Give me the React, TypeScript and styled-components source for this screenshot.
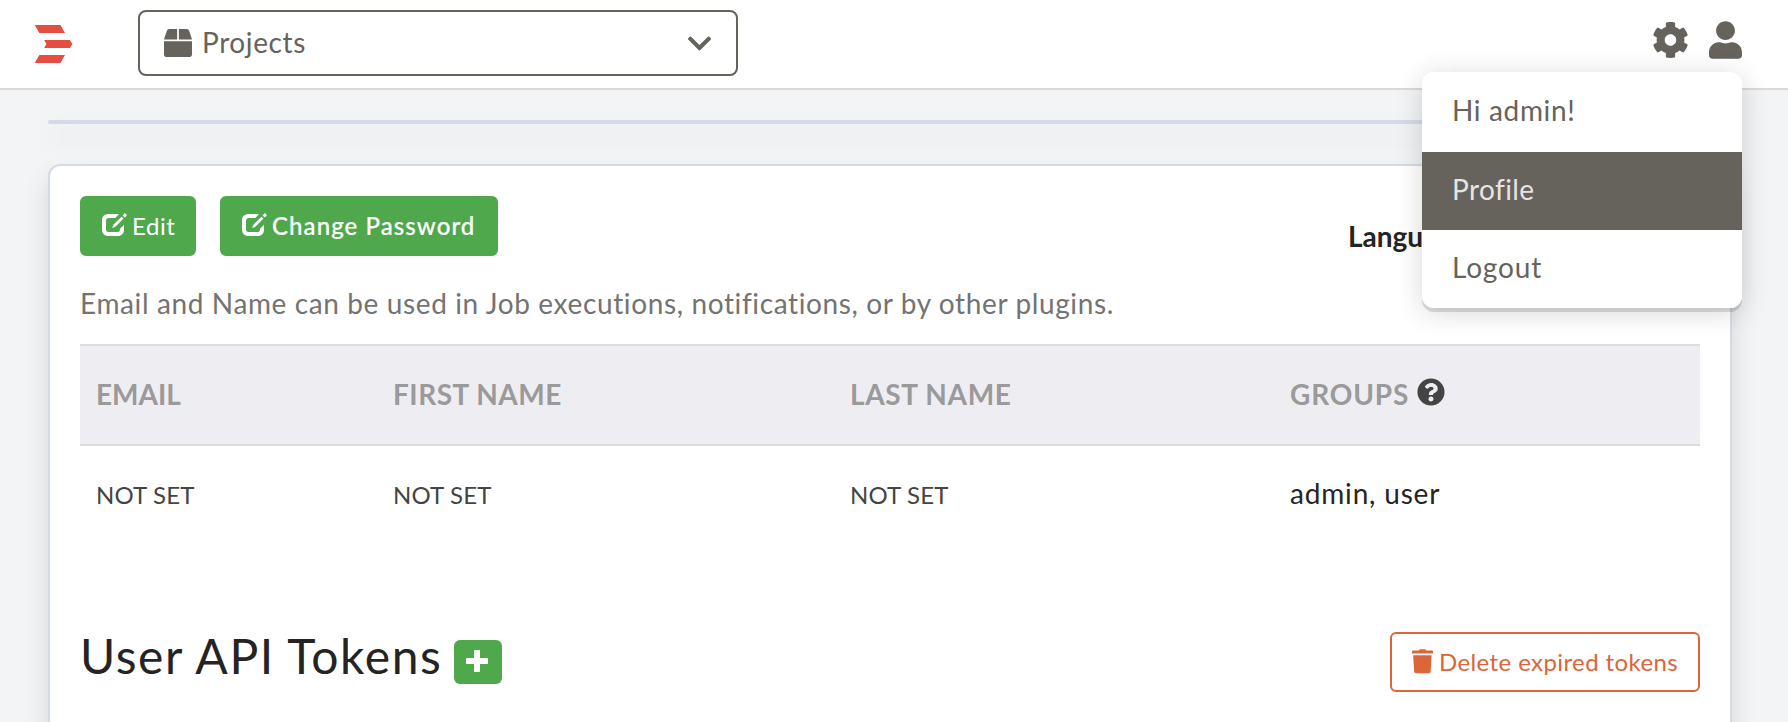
import React from "react";
import styled, { createGlobalStyle } from "styled-components";
import { FaBox, FaChevronDown, FaCog, FaQuestionCircle, FaUser } from "react-icons/fa";

const GlobalStyle = createGlobalStyle`
  *, *::before, *::after { box-sizing: border-box; }
  html, body { margin: 0; padding: 0; }
  body {
    height: 722px;
    overflow: hidden;
    background: #f3f4f6;
    color: #252422;
    font-family: Lato, "Open Sans", sans-serif;
    font-size: 28px;
  }
`;

const Page = styled.div`
  height: 722px;
  overflow: hidden;
`;

const Header = styled.header`
  position: relative;
  z-index: 2;
  display: flex;
  align-items: flex-start;
  height: 90px;
  background: #fff;
  border-bottom: 2px solid #d9d9d9;
  color: #66625c;
`;

const LogoLink = styled.div`
  width: 138px;
  padding: 25px 0 0 34px;
  line-height: 0;
`;

const ProjectSelect = styled.div`
  display: flex;
  align-items: center;
  width: 600px;
  height: 66px;
  margin-top: 10px;
  padding: 0 23px 0 24px;
  border: 2px solid #66625c;
  border-radius: 8px;
`;

const SelectLabel = styled.span`
  flex: 1;
  margin-left: 10px;
  padding-bottom: 2px;
  line-height: 34px;
  letter-spacing: 0.6px;
`;

const HeaderActions = styled.nav`
  display: flex;
  gap: 20px;
  margin-left: auto;
  padding: 21px 46px 0 0;
`;

const SettingsIcon = styled(FaCog)`
  width: 37px;
  height: 38px;
`;

const UserIcon = styled(FaUser)`
  width: 33px;
  height: 38px;
`;

const Menu = styled.div`
  position: absolute;
  top: 72px;
  right: 46px;
  width: 320px;
  overflow: hidden;
  border-radius: 12px;
  background: #fff;
`;

const MenuShadow = styled(Menu)`
  height: 236px;
  box-shadow: 0 4px 0 rgba(0, 0, 0, 0.13), 0 4px 28px rgba(0, 0, 0, 0.16);
`;

const MenuItem = styled.div<{ $active?: boolean; $height?: number; $spacing?: number }>`
  height: ${(p) => p.$height ?? 78}px;
  padding-left: 30px;
  line-height: ${(p) => (p.$height === 80 ? 76 : 75)}px;
  letter-spacing: ${(p) => p.$spacing ?? 0.4}px;
  background: ${(p) => (p.$active ? "#66625c" : "transparent")};
  color: ${(p) => (p.$active ? "#e6e4e0" : "#66625c")};
`;

const Content = styled.main`
  display: flex;
  flex-direction: column;
  gap: 40px;
  padding: 30px 56px 0 48px;
`;

const Card = styled.section`
  border: 2px solid #d4dbe6;
  border-radius: 12px;
  background: #fff;
  box-shadow: 0 14px 26px rgba(0, 0, 0, 0.12);
`;

const EmptyCard = styled(Card)`
  height: 4px;
`;

const ProfileCard = styled(Card)`
  height: 700px;
  padding: 30px 30px 0;
`;

const Toolbar = styled.div`
  display: flex;
  gap: 24px;
  height: 60px;
`;

const Button = styled.button<{ $width: number; $spacing?: number; $strong?: boolean }>`
  display: flex;
  align-items: flex-start;
  gap: 5px;
  width: ${(p) => p.$width}px;
  height: 60px;
  padding: 15px 0 0 20px;
  border: 2px solid #4fa84b;
  border-radius: 6px;
  background: #4fa84b;
  color: #fff;
  font: ${(p) => (p.$strong ? 500 : 400)} 24px/26px Lato, sans-serif;
  letter-spacing: ${(p) => p.$spacing ?? 0}px;
  -webkit-text-stroke: ${(p) => (p.$strong ? "0.2px #fff" : "0")};
  text-align: left;
  white-space: nowrap;
  svg { flex: none; }
`;

const OutlineButton = styled(Button)`
  gap: 6px;
  border-color: #dc6539;
  background: #fff;
  color: #dc6539;
`;

const LanguageLabel = styled.strong`
  width: 352px;
  margin-left: auto;
  padding-top: 23px;
  line-height: 34px;
`;

const Hint = styled.p`
  margin: 0;
  padding-top: 30px;
  height: 88px;
  line-height: 34px;
  color: #737373;
  letter-spacing: 0.62px;
  white-space: nowrap;
`;

const Row = styled.div`
  display: grid;
  grid-template-columns: 297px 457px 440px 426px;
`;

const HeadRow = styled(Row)`
  height: 102px;
  border-top: 2px solid #dcdcdc;
  border-bottom: 2px solid #dcdcdc;
  background: #eeedf2;
  color: #9a9a9a;
  font-weight: 700;
  line-height: 96px;
`;

const HeadCell = styled.div<{ $spacing?: number }>`
  display: flex;
  padding-left: 16px;
  letter-spacing: ${(p) => p.$spacing ?? 0}px;
`;

const HelpIcon = styled(FaQuestionCircle)`
  margin: 32px 0 0 8px;
  color: #444;
`;

const BodyRow = styled(Row)`
  height: 186px;
  line-height: 95px;
`;

const Cell = styled.div`
  padding-left: 16px;
  letter-spacing: 0.82px;
`;

const Unset = styled(Cell)`
  padding-top: 1px;
  color: #444;
  font-size: 24px;
  letter-spacing: 0.15px;
`;

const TokensBar = styled.div`
  display: flex;
  align-items: flex-start;
`;

const Title = styled.h2`
  margin: 0;
  font-size: 48px;
  font-weight: 400;
  line-height: 48px;
  letter-spacing: 1.58px;
  white-space: nowrap;
`;

const AddButton = styled.button`
  display: grid;
  place-items: center;
  width: 48px;
  height: 44px;
  margin: 8px auto 0 12px;
  padding: 0 2px 2px 0;
  border: 0;
  border-radius: 6px;
  background: #4fa84b;
`;

const Logo = () => (
  <svg width="40" height="38" viewBox="0 0 40 38" fill="#e44d42">
    <path d="M.7 0h25.8L31 8H5.3z" />
    <path d="M10.2 15h25.6l2.7 4-2.7 4H10.2l2.2-4z" />
    <path d="M5.3 30H31l-4.5 8H.7z" />
  </svg>
);

const EditIcon = () => (
  <svg width="25" height="24" viewBox="0 0 25 24" fill="none">
    <path d="M17 1H6.8C2.8 1 0 3.2 0 7v9.2C0 20.5 2.5 23 6.8 23h8.6c4.3 0 6.6-2.5 6.6-6.5v-4.8l-4 4v.5c0 2-1 2.8-2.7 2.8H7c-2 0-3-.9-3-2.8V8c0-2 1-3 3-3h6.4z" fill="#fff" />
    <path d="M10.2 15l1.2-3.3 8.2-7.9 1.9 1.8-8.1 8.1z" fill="#fff" />
    <path d="M20.6 2.4l1.5-1.7c.5-.5 1-.5 1.5 0l.8.9c.5.5.5.9 0 1.4l-1.7 1.5z" fill="#fff" />
  </svg>
);

const TrashIcon = () => (
  <svg width="21" height="25" viewBox="0 0 21 25" fill="#dc6539">
    <path d="M0 2.4c0-.5.4-.8.9-.8h5.8L7.8.3h5.4l1.1 1.3h5.8c.5 0 .9.3.9.8v2H0z" />
    <path d="M1.2 6.2h18.4L18.7 22c-.1 1.5-.8 2.3-2.3 2.3H4.5c-1.5 0-2.3-.8-2.4-2.3z" />
  </svg>
);

const PlusIcon = () => (
  <svg width="22" height="22" viewBox="0 0 22 22" fill="#fff">
    <path d="M8.7 0h4.6c.4 0 .7.3.7.7V8h7.3c.4 0 .7.3.7.7v4.6c0 .4-.3.7-.7.7H14v7.3c0 .4-.3.7-.7.7H8.7c-.4 0-.7-.3-.7-.7V14H.7c-.4 0-.7-.3-.7-.7V8.7c0-.4.3-.7.7-.7H8V.7c0-.4.3-.7.7-.7z" />
  </svg>
);

export default function App() {
  return (
    <Page>
      <GlobalStyle />
      <Header>
        <LogoLink><Logo /></LogoLink>
        <ProjectSelect>
          <FaBox size={28} />
          <SelectLabel>Projects</SelectLabel>
          <FaChevronDown size={27} />
        </ProjectSelect>
        <HeaderActions>
          <SettingsIcon />
          <UserIcon />
        </HeaderActions>
        <MenuShadow />
        <Menu>
          <MenuItem $height={80} $spacing={0.65}>Hi admin!</MenuItem>
          <MenuItem $active>Profile</MenuItem>
          <MenuItem $spacing={0.85}>Logout</MenuItem>
        </Menu>
      </Header>
      <Content>
        <EmptyCard />
        <ProfileCard>
          <Toolbar>
            <Button $width={116} $spacing={0.6}><EditIcon />Edit</Button>
            <Button $width={278} $spacing={1.08} $strong><EditIcon />Change Password</Button>
            <LanguageLabel>Language:</LanguageLabel>
          </Toolbar>
          <Hint>Email and Name can be used in Job executions, notifications, or by other plugins.</Hint>
          <HeadRow>
            <HeadCell>EMAIL</HeadCell>
            <HeadCell $spacing={0.5}>FIRST NAME</HeadCell>
            <HeadCell $spacing={0.65}>LAST NAME</HeadCell>
            <HeadCell $spacing={0.85}>GROUPS<HelpIcon size={28} /></HeadCell>
          </HeadRow>
          <BodyRow>
            <Unset>NOT SET</Unset>
            <Unset>NOT SET</Unset>
            <Unset>NOT SET</Unset>
            <Cell>admin, user</Cell>
          </BodyRow>
          <TokensBar>
            <Title>User API Tokens</Title>
            <AddButton aria-label="Add token"><PlusIcon /></AddButton>
            <OutlineButton $width={310} $spacing={0.4}><TrashIcon />Delete expired tokens</OutlineButton>
          </TokensBar>
        </ProfileCard>
      </Content>
    </Page>
  );
}
